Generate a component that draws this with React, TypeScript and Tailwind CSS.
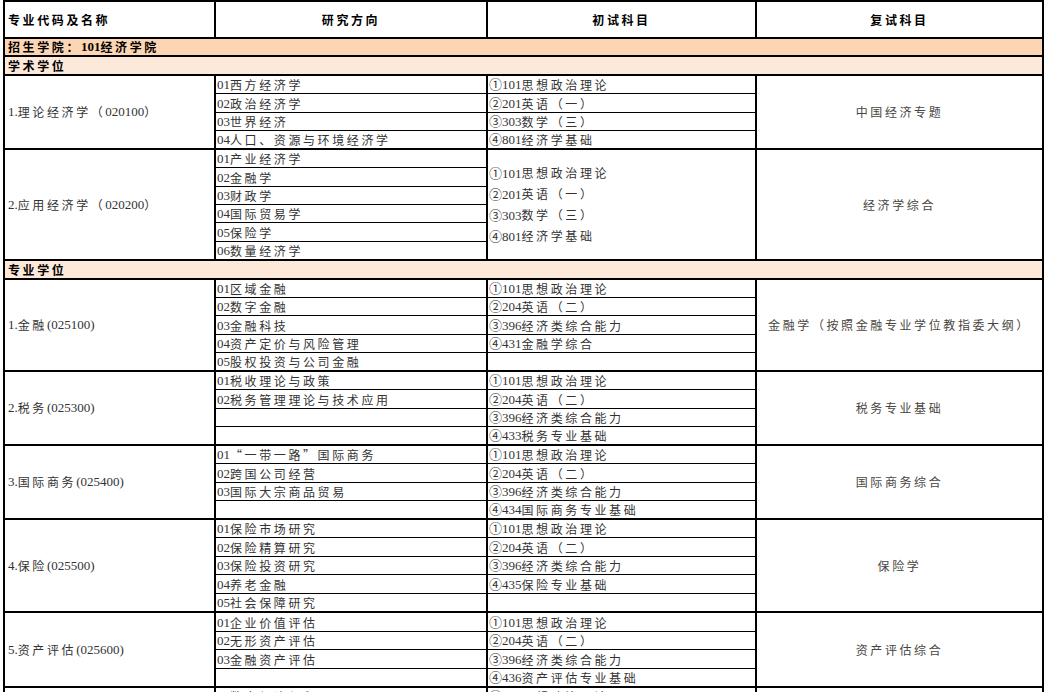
import React from 'react';

type Major = {
  name: string;
  dirs: string[];
  subs: string[];
  merged?: boolean;
  retest: string;
  h: string;
};

const academic: Major[] = [
  {
    name: '1.理论经济学（020100）',
    dirs: ['01西方经济学', '02政治经济学', '03世界经济', '04人口、资源与环境经济学'],
    subs: ['①101思想政治理论', '②201英语（一）', '③303数学（三）', '④801经济学基础'],
    retest: '中国经济专题',
    h: 'h-[74px]',
  },
  {
    name: '2.应用经济学（020200）',
    dirs: ['01产业经济学', '02金融学', '03财政学', '04国际贸易学', '05保险学', '06数量经济学'],
    subs: ['①101思想政治理论', '②201英语（一）', '③303数学（三）', '④801经济学基础'],
    merged: true,
    retest: '经济学综合',
    h: 'h-[111px]',
  },
];

const professional: Major[] = [
  {
    name: '1.金融(025100)',
    dirs: ['01区域金融', '02数字金融', '03金融科技', '04资产定价与风险管理', '05股权投资与公司金融'],
    subs: ['①101思想政治理论', '②204英语（二）', '③396经济类综合能力', '④431金融学综合', ''],
    retest: '金融学（按照金融专业学位教指委大纲）',
    h: 'h-[92px]',
  },
  {
    name: '2.税务(025300)',
    dirs: ['01税收理论与政策', '02税务管理理论与技术应用', '', ''],
    subs: ['①101思想政治理论', '②204英语（二）', '③396经济类综合能力', '④433税务专业基础'],
    retest: '税务专业基础',
    h: 'h-[74px]',
  },
  {
    name: '3.国际商务(025400)',
    dirs: ['01“一带一路”国际商务', '02跨国公司经营', '03国际大宗商品贸易', ''],
    subs: ['①101思想政治理论', '②204英语（二）', '③396经济类综合能力', '④434国际商务专业基础'],
    retest: '国际商务综合',
    h: 'h-[74px]',
  },
  {
    name: '4.保险(025500)',
    dirs: ['01保险市场研究', '02保险精算研究', '03保险投资研究', '04养老金融', '05社会保障研究'],
    subs: ['①101思想政治理论', '②204英语（二）', '③396经济类综合能力', '④435保险专业基础', ''],
    retest: '保险学',
    h: 'h-[93px]',
  },
  {
    name: '5.资产评估(025600)',
    dirs: ['01企业价值评估', '02无形资产评估', '03金融资产评估', ''],
    subs: ['①101思想政治理论', '②204英语（二）', '③396经济类综合能力', '④436资产评估专业基础'],
    retest: '资产评估综合',
    h: 'h-[75px]',
  },
  {
    name: '6.数字经济(025800)',
    dirs: ['01数字经济与贸易', '02数字金融与管理', '', ''],
    subs: ['①101思想政治理论', '②204英语（二）', '③396经济类综合能力', '④437数字经济专业基础'],
    retest: '数字经济综合',
    h: 'h-[74px]',
  },
];

// CJK runs get the CJK font and the wide spacing of the sheet; digits stay serif
function T({ s }: { s: string }) {
  const parts = s.split(/([\u3000-\u303f\u4e00-\u9fff\uff00-\uffef“”]+)/);
  return (
    <>
      {parts.map((p, i) =>
        i % 2 === 1 ? (
          <span key={i} className="font-['Noto_Sans_CJK_SC',sans-serif] text-[12px] tracking-[2.6px]">
            {p}
          </span>
        ) : (
          <span key={i}>{p}</span>
        )
      )}
    </>
  );
}

function SubCell({ s }: { s: string }) {
  return (
    <div className="flex-1 flex items-end pl-[1px] pb-[1px] leading-[15px] whitespace-nowrap overflow-hidden border-b border-black last:border-b-0">
      <T s={s} />
    </div>
  );
}

function MajorRow({ m }: { m: Major }) {
  return (
    <div className={`flex ${m.h} border-b-2 border-black text-[#333]`}>
      <div className="w-[211px] shrink-0 border-r-2 border-black flex items-center pl-[3px] whitespace-nowrap">
        <T s={m.name} />
      </div>
      <div className="w-[272px] shrink-0 border-r-2 border-black flex flex-col">
        {m.dirs.map((d, i) => (
          <SubCell key={i} s={d} />
        ))}
      </div>
      <div className="w-[269px] shrink-0 border-r-2 border-black flex flex-col">
        {m.merged ? (
          <div className="flex-1 flex flex-col justify-center pl-[1px] leading-[20px]">
            {m.subs.map((s, i) => (
              <div key={i} className="whitespace-nowrap">
                <T s={s} />
              </div>
            ))}
          </div>
        ) : (
          m.subs.map((s, i) => <SubCell key={i} s={s} />)
        )}
      </div>
      <div className="flex-1 flex items-center justify-center text-[#4a4540] whitespace-nowrap">
        <T s={m.retest} />
      </div>
    </div>
  );
}

function Section({ label, bg, h }: { label: string; bg: string; h: string }) {
  return (
    <div className={`${h} ${bg} border-b-2 border-black flex items-center pl-[3px] font-bold text-black whitespace-nowrap`}>
      <T s={label} />
    </div>
  );
}

export default function App() {
  return (
    <div className="w-[1045px] h-[692px] overflow-hidden bg-white font-['Liberation_Serif','Noto_Sans_CJK_SC',serif] text-[13px]">
      <div className="ml-[3px] w-[1041px] border-x-2 border-t-2 border-black">
        <div className="flex h-[37px] border-b-2 border-black font-bold text-black">
          <div className="w-[211px] shrink-0 border-r-2 border-black flex items-center pl-[3px]">
            <T s="专业代码及名称" />
          </div>
          <div className="w-[272px] shrink-0 border-r-2 border-black flex items-center justify-center">
            <T s="研究方向" />
          </div>
          <div className="w-[269px] shrink-0 border-r-2 border-black flex items-center justify-center">
            <T s="初试科目" />
          </div>
          <div className="flex-1 flex items-center justify-center">
            <T s="复试科目" />
          </div>
        </div>

        <Section label="招生学院：101经济学院" bg="bg-[#fcd5b4]" h="h-[18px]" />
        <Section label="学术学位" bg="bg-[#fde9d9]" h="h-[19px]" />
        {academic.map((m) => (
          <MajorRow key={m.name} m={m} />
        ))}

        <Section label="专业学位" bg="bg-[#fde9d9]" h="h-[19px]" />
        {professional.map((m) => (
          <MajorRow key={m.name} m={m} />
        ))}
      </div>
    </div>
  );
}
